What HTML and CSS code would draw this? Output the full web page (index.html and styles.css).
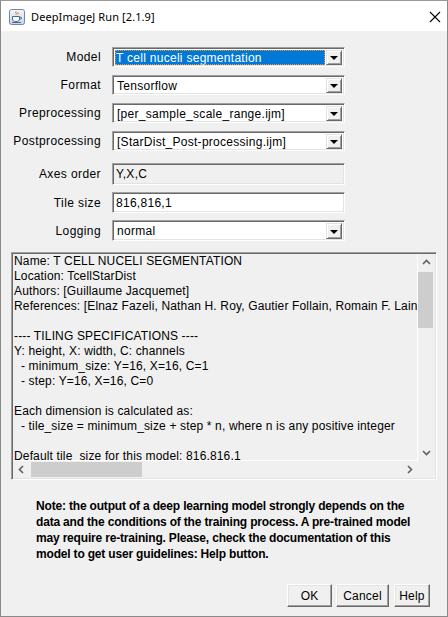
FILE: index.html
```html
<!DOCTYPE html>
<html>
<head>
<meta charset="utf-8">
<title>DeepImageJ Run [2.1.9]</title>
<link rel="stylesheet" href="styles.css">
</head>
<body>
<div class="window">
  <div class="titlebar">
    <svg class="appicon" width="16" height="16" viewBox="0 0 16 16">
      <defs>
        <linearGradient id="g" x1="0" y1="0" x2="0" y2="1">
          <stop offset="0" stop-color="#f4f7fb"/>
          <stop offset="1" stop-color="#c9d6e6"/>
        </linearGradient>
      </defs>
      <rect x="0.5" y="0.5" width="15" height="15" rx="2" fill="url(#g)" stroke="#6f87a8"/>
      <path d="M7 2.5c-1.5 1.2 1.5 1.8 0 3.2M9 3c-1 .9 1 1.4 0 2.4" fill="none" stroke="#e2641c" stroke-width="1"/>
      <path d="M3.5 7.5h7v2.5c0 1.6-1.3 2.5-3.5 2.5s-3.5-.9-3.5-2.5z" fill="#fff" stroke="#4a6a96" stroke-width="1"/>
      <path d="M10.5 8.2h1.3c.9 0 .9 1.8 0 1.8h-1.3" fill="none" stroke="#4a6a96" stroke-width="1"/>
      <path d="M3 13.5h9" stroke="#4a6a96" stroke-width="1"/>
    </svg>
    <span class="title">DeepImageJ Run [2.1.9]</span>
    <svg class="close" width="12" height="12" viewBox="0 0 12 12">
      <path d="M1 1L11 11M11 1L1 11" stroke="#000" stroke-width="1.1" fill="none"/>
    </svg>
  </div>

  <div class="content">
    <div class="form">
      <div class="row first">
        <label class="lbl">Model</label>
        <div class="combo">
          <div class="combo-value"><span class="selected">T cell nuceli segmentation</span></div>
          <div class="combo-btn"><span class="tri"></span></div>
        </div>
      </div>
      <div class="row">
        <label class="lbl">Format</label>
        <div class="combo">
          <div class="combo-value">Tensorflow</div>
          <div class="combo-btn"><span class="tri"></span></div>
        </div>
      </div>
      <div class="row">
        <label class="lbl">Preprocessing</label>
        <div class="combo">
          <div class="combo-value">[per_sample_scale_range.ijm]</div>
          <div class="combo-btn"><span class="tri"></span></div>
        </div>
      </div>
      <div class="row">
        <label class="lbl">Postprocessing</label>
        <div class="combo">
          <div class="combo-value">[StarDist_Post-processing.ijm]</div>
          <div class="combo-btn"><span class="tri"></span></div>
        </div>
      </div>
      <div class="row tf axes">
        <label class="lbl">Axes order</label>
        <div class="field disabled">Y,X,C</div>
      </div>
      <div class="row tf tile">
        <label class="lbl">Tile size</label>
        <div class="field">816,816,1</div>
      </div>
      <div class="row tf log">
        <label class="lbl">Logging</label>
        <div class="combo">
          <div class="combo-value">normal</div>
          <div class="combo-btn"><span class="tri"></span></div>
        </div>
      </div>
    </div>

    <div class="scrollpane">
      <div class="viewport"><pre class="info">Name: T CELL NUCELI SEGMENTATION
Location: TcellStarDist
Authors: [Guillaume Jacquemet]
References: [Elnaz Fazeli, Nathan H. Roy, Gautier Follain, Romain F. Laine, Lucas von Chamier, Guillaume Jacquemet]

---- TILING SPECIFICATIONS ----
Y: height, X: width, C: channels
  - minimum_size: Y=16, X=16, C=1
  - step: Y=16, X=16, C=0

Each dimension is calculated as:
  - tile_size = minimum_size + step * n, where n is any positive integer

Default tile  size for this model: 816,816,1</pre></div>
      <div class="vbar">
        <svg class="arrow" width="17" height="17" viewBox="0 0 17 17"><path d="M5 10l3.5-3.5L12 10" fill="none" stroke="#606060" stroke-width="1.6"/></svg>
        <div class="vtrack"><div class="vthumb"></div></div>
        <svg class="arrow" width="17" height="17" viewBox="0 0 17 17"><path d="M5 7l3.5 3.5L12 7" fill="none" stroke="#606060" stroke-width="1.6"/></svg>
      </div>
      <div class="hbar">
        <svg class="arrow" width="17" height="17" viewBox="0 0 17 17"><path d="M10 5L6.5 8.5L10 12" fill="none" stroke="#606060" stroke-width="1.6"/></svg>
        <div class="htrack"><div class="hthumb"></div></div>
        <svg class="arrow" width="17" height="17" viewBox="0 0 17 17"><path d="M7 5l3.5 3.5L7 12" fill="none" stroke="#606060" stroke-width="1.6"/></svg>
      </div>
      <div class="corner"></div>
    </div>

    <p class="note">Note: the output of a deep learning model strongly depends on the<br>data and the conditions of the training process. A pre-trained model<br>may require re-training. Please, check the documentation of this<br>model to get user guidelines: Help button.</p>

    <div class="buttons">
      <button class="btn ok">OK</button>
      <button class="btn cancel">Cancel</button>
      <button class="btn help">Help</button>
    </div>
  </div>
</div>
</body>
</html>
```

FILE: styles.css
```css
* { box-sizing: border-box; }

html, body {
  margin: 0;
  padding: 0;
  background: #f0f0f0;
}

body {
  font-family: "Liberation Sans", Arial, sans-serif;
  font-size: 12px;
  color: #000;
}

.window {
  width: 448px;
  height: 617px;
  border: 1px solid #8a8a8a;
  border-top-color: #9a9a9a;
  background: #f0f0f0;
  display: flex;
  flex-direction: column;
}

.titlebar {
  height: 30px;
  background: #fff;
  display: flex;
  align-items: center;
  flex-shrink: 0;
}

.appicon {
  margin-left: 8px;
  margin-top: 1px;
}

.title {
  margin-left: 6px;
  font-family: "Noto Sans", "Open Sans", sans-serif;
  font-size: 11px;
  color: #000;
  flex: 1;
  letter-spacing: 0.1px;
}

.close {
  margin-right: 6px;
  margin-top: 1px;
}

.content {
  flex: 1;
  display: flex;
  flex-direction: column;
}

.form {
  padding-top: 16px;
  display: flex;
  flex-direction: column;
}

.row {
  display: flex;
  align-items: center;
  height: 20px;
  margin-top: 8px;
}

.row.first { margin-top: 0; }
.row.axes { margin-top: 12px; height: 22px; }
.row.tile { margin-top: 7px; height: 21px; }
.row.log { margin-top: 7px; height: 21px; }

.lbl {
  width: 100px;
  text-align: right;
  margin-right: 11px;
  white-space: nowrap;
  letter-spacing: 0.4px;
}

.combo, .field {
  width: 233px;
  height: 100%;
  border-top: 1px solid #a0a0a0;
  border-left: 1px solid #a0a0a0;
  border-right: 1px solid #fff;
  border-bottom: 1px solid #fff;
  box-shadow: inset 1px 1px 0 #696969, inset -1px -1px 0 #e3e3e3;
  background: #fff;
  letter-spacing: 0.28px;
}

.combo {
  display: flex;
  align-items: stretch;
  padding: 2px 2px 1px 2px;
}

.combo-value {
  flex: 1;
  display: flex;
  align-items: center;
  padding-left: 0;
  white-space: nowrap;
  overflow: hidden;
}

.selected {
  display: flex;
  align-items: center;
  width: 100%;
  height: 100%;
  background: #0078d7;
  color: #fff;
  padding-left: 1px;
  outline: 1px dotted #f39a1e;
  outline-offset: -1px;
}

.combo-value:not(:has(.selected)) {
  padding-left: 2px;
}

.combo-btn {
  width: 16px;
  margin-left: 1px;
  background: #f0f0f0;
  border-top: 1px solid #e3e3e3;
  border-left: 1px solid #e3e3e3;
  border-right: 1px solid #696969;
  border-bottom: 1px solid #696969;
  box-shadow: inset 1px 1px 0 #fff, inset -1px -1px 0 #a0a0a0;
  display: flex;
  align-items: center;
  justify-content: center;
}

.tri {
  width: 0;
  height: 0;
  border-left: 4px solid transparent;
  border-right: 4px solid transparent;
  border-top: 4px solid #000;
  margin-top: 1px;
}

.field {
  padding-left: 3px;
  display: flex;
  align-items: center;
}

.field.disabled {
  background: #f0f0f0;
}

.scrollpane {
  margin: 11px 0 0 10px;
  width: 426px;
  height: 228px;
  border-top: 1px solid #a0a0a0;
  border-left: 1px solid #a0a0a0;
  border-right: 1px solid #fff;
  border-bottom: 1px solid #fff;
  box-shadow: inset 1px 1px 0 #696969, inset -1px -1px 0 #e3e3e3;
  padding: 1px;
  display: grid;
  grid-template-columns: 1fr 17px;
  grid-template-rows: 1fr 17px;
  background: #f0f0f0;
}

.viewport {
  overflow: hidden;
  border-right: 1px solid #fff;
  border-bottom: 1px solid #fff;
  background: #f0f0f0;
}

.info {
  margin: 0;
  padding: 0 0 0 1px;
  font-family: "Liberation Sans", Arial, sans-serif;
  font-size: 12px;
  line-height: 15px;
  white-space: pre;
  color: #000;
  letter-spacing: 0.15px;
}

.vbar {
  display: flex;
  flex-direction: column;
  background: #f0f0f0;
}

.vtrack {
  flex: 1;
  padding-top: 1px;
}

.vthumb {
  width: 15px;
  height: 56px;
  background: #cdcdcd;
}

.hbar {
  display: flex;
  flex-direction: row;
  background: #f0f0f0;
}

.htrack {
  flex: 1;
  padding-left: 1px;
  padding-top: 1px;
}

.hthumb {
  width: 111px;
  height: 15px;
  background: #cdcdcd;
}

.arrow { flex-shrink: 0; display: block; }

.corner { background: #f0f0f0; }

.note {
  margin: 18px 0 0 35px;
  font-weight: bold;
  font-size: 12px;
  line-height: 16px;
  white-space: nowrap;
  letter-spacing: -0.18px;
}

.buttons {
  margin-top: auto;
  margin-bottom: 9px;
  margin-right: 17px;
  display: flex;
  justify-content: flex-end;
  gap: 4px;
}

.btn {
  height: 23px;
  font-family: "Liberation Sans", Arial, sans-serif;
  font-size: 12px;
  color: #000;
  background: #f0f0f0;
  border-top: 1px solid #fff;
  border-left: 1px solid #fff;
  border-right: 1px solid #696969;
  border-bottom: 1px solid #696969;
  box-shadow: inset -1px -1px 0 #a0a0a0, inset 1px 1px 0 #e3e3e3;
  padding: 0;
  margin: 0;
  letter-spacing: 0.2px;
}

.btn.ok { width: 45px; }
.btn.cancel { width: 53px; }
.btn.help { width: 36px; margin-left: 1px; }
```
